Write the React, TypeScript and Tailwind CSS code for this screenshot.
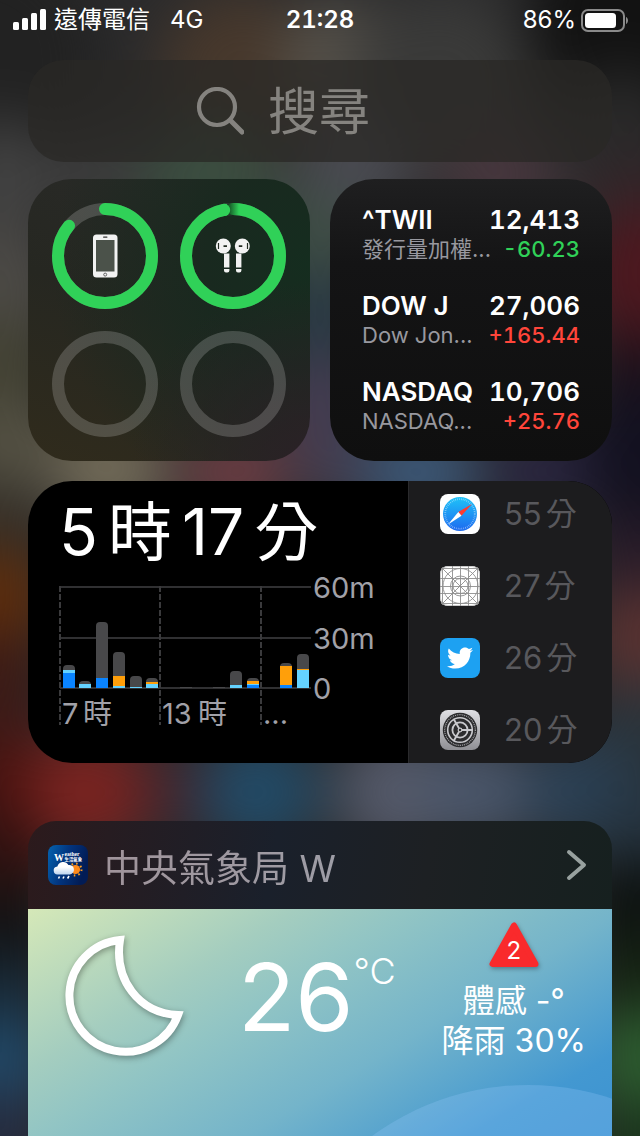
import React from 'react';
import { FaTwitter } from 'react-icons/fa';

interface Stock {
  symbol: string;
  name: string;
  price: string;
  change: string;
}

interface Bar {
  x: number;
  top: number;
  parts: { y: number; fill: string }[];
}

interface AppUsage {
  label: string;
  minutes: number;
  icon: React.ReactNode;
}

const BLUE = '#0a84ff';
const CYAN = '#64d2ff';
const ORANGE = '#ff9f0a';
const BASELINE = 114;

// [cx, cy, radius, color]
const WALLPAPER: [number, number, number, string][] = [
  [-20, 60, 120, '#222222'],
  [660, 20, 130, '#121212'],
  [240, 70, 80, '#47382c'],
  [340, 60, 60, '#55514a'],
  [440, 80, 90, '#3a3a39'],
  [620, 130, 60, '#2a2a2a'],
  [0, 180, 60, '#414141'],
  [100, 175, 50, '#3c3c3c'],
  [210, 180, 70, '#3b4d40'],
  [350, 175, 60, '#4a4a52'],
  [500, 180, 60, '#46363d'],
  [0, 290, 65, '#4c4a46'],
  [0, 370, 55, '#434233'],
  [0, 450, 55, '#545143'],
  [320, 240, 50, '#3f4f46'],
  [320, 320, 50, '#2a3b46'],
  [320, 400, 45, '#473f56'],
  [640, 200, 50, '#32262a'],
  [650, 280, 75, '#4c181f'],
  [640, 375, 45, '#1e0e18'],
  [650, 460, 80, '#131120'],
  [110, 468, 60, '#706957'],
  [235, 472, 55, '#683c42'],
  [330, 470, 35, '#473f53'],
  [420, 472, 60, '#3b5573'],
  [540, 472, 50, '#29253f'],
  [-5, 530, 50, '#342f28'],
  [-5, 600, 55, '#5e2d0c'],
  [-5, 680, 50, '#3d1a15'],
  [635, 560, 45, '#291b29'],
  [645, 640, 55, '#5a3231'],
  [645, 730, 50, '#2a343b'],
  [0, 780, 55, '#48120f'],
  [90, 792, 65, '#782320'],
  [180, 792, 40, '#3f2730'],
  [260, 792, 60, '#224a66'],
  [400, 792, 65, '#545969'],
  [480, 792, 55, '#4a566a'],
  [580, 792, 55, '#2b4156'],
  [645, 820, 50, '#263542'],
  [0, 860, 50, '#2f100f'],
  [0, 935, 50, '#101011'],
  [0, 1000, 50, '#182a38'],
  [0, 1065, 50, '#204a6b'],
  [0, 1140, 50, '#262c40'],
  [640, 910, 55, '#0c1110'],
  [640, 980, 50, '#142212'],
  [645, 1060, 55, '#2c5d2f'],
  [645, 1150, 50, '#19351b'],
];

const STOCKS: Stock[] = [
  { symbol: '^TWII', name: '發行量加權...', price: '12,413', change: '-60.23' },
  { symbol: 'DOW J', name: 'Dow Jon...', price: '27,006', change: '+165.44' },
  { symbol: 'NASDAQ', name: 'NASDAQ...', price: '10,706', change: '+25.76' },
];

const BARS: Bar[] = [
  { x: 5, top: 91, parts: [{ y: 96, fill: CYAN }, { y: 99, fill: BLUE }] },
  { x: 21, top: 107, parts: [{ y: 110, fill: CYAN }] },
  { x: 38, top: 48, parts: [{ y: 104, fill: BLUE }] },
  { x: 55, top: 78, parts: [{ y: 102, fill: ORANGE }, { y: 112, fill: CYAN }] },
  { x: 72, top: 102, parts: [{ y: 113, fill: CYAN }] },
  { x: 88, top: 104, parts: [{ y: 108, fill: ORANGE }, { y: 110, fill: CYAN }] },
  { x: 122, top: 113, parts: [] },
  { x: 155, top: 113, parts: [] },
  { x: 172, top: 97, parts: [{ y: 111, fill: CYAN }] },
  { x: 189, top: 104, parts: [{ y: 107, fill: ORANGE }, { y: 110, fill: CYAN }, { y: 111, fill: BLUE }] },
  { x: 222, top: 89, parts: [{ y: 92, fill: ORANGE }, { y: 111, fill: BLUE }] },
  { x: 239, top: 80, parts: [{ y: 95, fill: ORANGE }, { y: 96, fill: CYAN }] },
];

const Wallpaper = () => (
  <svg
    className="absolute inset-0 -z-10 h-full w-full"
    viewBox="0 0 640 1136"
    preserveAspectRatio="none"
    aria-hidden="true"
  >
    <defs>
      <filter id="soft" x="-30%" y="-30%" width="160%" height="160%" colorInterpolationFilters="sRGB">
        <feGaussianBlur stdDeviation="28" />
      </filter>
    </defs>
    <rect width="640" height="1136" fill="#2b2b2c" />
    <g filter="url(#soft)">
      {WALLPAPER.map(([cx, cy, r, fill], i) => (
        <circle key={i} cx={cx} cy={cy} r={r} fill={fill} />
      ))}
    </g>
  </svg>
);

const StatusBar = () => (
  <header className="flex h-10 items-center px-3 text-2xl text-white">
    <div className="flex flex-1 items-center">
      <svg className="h-6 w-9" viewBox="0 0 36 24" fill="#fff" aria-hidden="true">
        <rect x="1" y="14" width="6" height="8" rx="1.5" />
        <rect x="10" y="10" width="6" height="12" rx="1.5" />
        <rect x="19" y="5" width="6" height="17" rx="1.5" />
        <rect x="28" y="1" width="6" height="21" rx="1.5" />
      </svg>
      <span className="ml-1.5">遠傳電信</span>
      <span className="ml-5">4G</span>
    </div>
    <span className="font-semibold tabular-nums">21:28</span>
    <div className="flex flex-1 items-center justify-end gap-1">
      <span>86%</span>
      <svg className="h-6 w-12" viewBox="0 0 48 24" aria-hidden="true">
        <rect x="2" y="2" width="42" height="21" rx="6" fill="none" stroke="#8a8a8a" strokeWidth="2" />
        <rect x="5" y="5" width="31" height="15" rx="3.5" fill="#fff" />
        <path d="M46 9c1.300.600 2 2 2 3.500s-.7 2.900-2 3.500z" fill="#8a8a8a" />
      </svg>
    </div>
  </header>
);

const SearchBar = () => (
  <label className="mt-5 flex h-[102px] items-center gap-6 rounded-[36px] bg-[#292826]/75 pl-42 text-[#85837f]">
    <svg className="size-12 shrink-0" viewBox="0 0 48 48" fill="none" stroke="currentColor" strokeLinecap="round" aria-hidden="true">
      <circle cx="21" cy="20" r="18" strokeWidth="4.200" />
      <path d="M34.500 33.500L46 45" strokeWidth="5" />
    </svg>
    <input
      type="search"
      aria-label="搜尋"
      placeholder="搜尋"
      className="w-full min-w-0 bg-transparent text-[51px] leading-none outline-none placeholder:text-[#85837f]"
    />
  </label>
);

const Ring = ({ level, children }: { level?: number; children?: React.ReactNode }) => {
  const length = 2 * Math.PI * 47;
  return (
    <svg className="w-full" viewBox="0 0 106 106" fill="none">
      <circle cx="53" cy="53" r="47" stroke="#fff" strokeOpacity="0.18" strokeWidth="12" />
      {level && (
        <circle
          cx="53"
          cy="53"
          r="47"
          stroke="#30d158"
          strokeWidth="12"
          strokeLinecap="round"
          strokeDasharray={`${level * length} ${length}`}
          transform="rotate(-90 53 53)"
        />
      )}
      {children}
    </svg>
  );
};

const BatteryWidget = () => (
  <section className="grid grid-cols-2 gap-[22px] rounded-[44px] bg-[radial-gradient(circle_at_100%_100%,#2a2126_0%,#2a212600_45%),radial-gradient(circle_at_100%_30%,#152d1f_0%,#19291f_30%,#25262200_75%),linear-gradient(200deg,#292a28_10%,#262721_50%,#302b1c_100%)] p-6">
    <Ring level={0.86}>
      <rect x="41" y="31.500" width="24.500" height="43" rx="3.500" fill="#f2f2f2" />
      <rect x="44" y="37" width="18.500" height="31.500" fill="#4b524a" />
      <rect x="51" y="33.500" width="4.500" height="1.200" rx="0.600" fill="#333" />
      <circle cx="53.200" cy="71.600" r="1.500" stroke="#444" strokeWidth="0.800" />
    </Ring>
    <Ring level={0.97}>
      <defs>
        <linearGradient id="cap-shadow" x1="0" y1="0" x2="1" y2="0">
          <stop offset="0.250" stopColor="#0b2a14" stopOpacity="0.650" />
          <stop offset="1" stopColor="#0b2a14" stopOpacity="0" />
        </linearGradient>
      </defs>
      <path d="M47 .4Q53-.3 59 .5V12.300Q53 11.500 47 12.500z" fill="url(#cap-shadow)" />
      <circle cx="44.200" cy="6.900" r="6" fill="#30d158" />
      <g fill="#f2f2f2">
        <circle cx="43.300" cy="43" r="7.500" />
        <circle cx="62.300" cy="43" r="7.500" />
        <path d="M44 50.500h5.400V64.500H44zM56 50.500h5.400V64.500H56z" />
        <path d="M44 66h5.400v1.500a2 2 0 0 1-2 2h-1.400a2 2 0 0 1-2-2zM56 66h5.400v1.500a2 2 0 0 1-2 2H58a2 2 0 0 1-2-2z" />
      </g>
      <path d="M38.500 40v6M67.500 40v6" stroke="#222b22" strokeWidth="1.200" />
      <path d="M43.500 43.200h3.500M58.800 43.200h3.500" stroke="#222b22" strokeWidth="1.800" />
    </Ring>
    <Ring />
    <Ring />
  </section>
);

const StocksWidget = () => (
  <section className="flex flex-col gap-7 rounded-[44px] bg-linear-to-b from-[#1f1f20] via-[#141415] via-30% to-[#0f0f0f] px-8 py-[26px]">
    {STOCKS.map(stock => (
      <div key={stock.symbol} className="whitespace-nowrap">
        <div className="flex justify-between text-[26px] leading-[30px] font-semibold text-white">
          <span>{stock.symbol}</span>
          <span className="tabular-nums">{stock.price}</span>
        </div>
        <div className="flex justify-between text-[22px] leading-7">
          <span className="text-[#98989f]">{stock.name}</span>
          <span
            className={
              stock.change.startsWith('-')
                ? 'font-medium text-[#30d158] tabular-nums'
                : 'font-medium text-[#ff453a] tabular-nums'
            }
          >
            {stock.change}
          </span>
        </div>
      </div>
    ))}
  </section>
);

const UsageChart = () => (
  <svg className="h-[170px] w-[324px]" viewBox="0 -10 324 170">
    <g stroke="#303032" strokeWidth="2">
      <path d="M1 13H252M1 64H252M1 114H252" />
      <path d="M1 12V151M101 12V151M202 12V151" stroke="#3a3a3c" strokeDasharray="6 2" />
    </g>
    {BARS.map(bar => (
      <g key={bar.x} transform="translate(-1 0)">
        <path
          d={
            BASELINE - bar.top > 3
              ? `M${bar.x} ${BASELINE}V${bar.top + 4}q0-4 4-4h4q4 0 4 4V${BASELINE}z`
              : `M${bar.x} ${BASELINE}v-1h12v1z`
          }
          fill="#48484a"
        />
        {bar.parts.map(part => (
          <rect key={part.y} x={bar.x} y={part.y} width="12" height={BASELINE - part.y} fill={part.fill} />
        ))}
      </g>
    ))}
    <g fill="#a1a1a8" className="text-[29px]">
      <text x="254" y="24">60m</text>
      <text x="254" y="75">30m</text>
      <text x="254" y="125">0</text>
      <text x="3" y="150">7</text>
      <text x="24" y="150">時</text>
      <text x="103" y="150">13</text>
      <text x="139" y="150">時</text>
      <text x="204" y="150">...</text>
    </g>
  </svg>
);

const SafariIcon = () => (
  <svg className="size-10" viewBox="0 0 40 40">
    <defs>
      <linearGradient id="safari" x1="0" y1="0" x2="0" y2="1">
        <stop stopColor="#1fc3f8" />
        <stop offset="1" stopColor="#1d6af0" />
      </linearGradient>
    </defs>
    <rect width="40" height="40" rx="8" fill="#fff" />
    <circle cx="20" cy="20" r="17" fill="url(#safari)" />
    <circle cx="20" cy="20" r="14.800" fill="none" stroke="#fff" strokeOpacity="0.6" strokeWidth="1.800" strokeDasharray="0.600 1.300" />
    <path d="M32 10L18.300 18 21.500 21.800z" fill="#ff3b30" />
    <path d="M8 30.500L18.300 18 21.500 21.800z" fill="#fff" />
  </svg>
);

const TemplateIcon = () => (
  <svg className="size-10" viewBox="0 0 40 40" fill="none" stroke="#8e8e8e" strokeWidth="0.900">
    <rect width="40" height="40" rx="8" fill="#fff" stroke="none" />
    <rect x="0.500" y="0.500" width="39" height="39" rx="7.500" stroke="#c4c4c4" />
    <path d="M2.500 1v38M37.500 1v38M12.500 0v40M20.500 0v40M28.500 0v40M1 2.500h38M1 37.500h38M0 12.500h40M0 20.500h40M0 27.500h40" />
    <path d="M3 3l34 34M37 3L3 37" />
    <circle cx="20.500" cy="20" r="17.500" />
    <circle cx="20.500" cy="20" r="10" />
    <circle cx="20.500" cy="20" r="7.500" />
  </svg>
);

const TwitterIcon = () => (
  <div className="flex size-10 items-center justify-center rounded-lg bg-[#1da1f2] text-white">
    <FaTwitter size={26} />
  </div>
);

const SettingsIcon = () => (
  <svg className="size-10" viewBox="0 0 40 40" fill="none">
    <defs>
      <linearGradient id="settings" x1="0" y1="0" x2="0" y2="1">
        <stop stopColor="#e0e0e4" />
        <stop offset="1" stopColor="#8f8f94" />
      </linearGradient>
    </defs>
    <rect width="40" height="40" rx="8" fill="url(#settings)" />
    <circle cx="20" cy="20" r="17.200" fill="#2c2c2e" />
    <circle cx="20" cy="20" r="15.300" stroke="#b5b5b9" strokeWidth="1.200" strokeDasharray="0.900 1" />
    <circle cx="20" cy="20" r="12.300" stroke="#c9c9cd" strokeWidth="1.600" />
    <circle cx="20" cy="20" r="7.600" stroke="#c9c9cd" strokeWidth="1.800" />
    <path d="M22 20H33M19 18.200L13.500 8.700M19 21.800L13.500 31.300" stroke="#c9c9cd" strokeWidth="1.900" />
    <circle cx="20" cy="20" r="1.800" fill="#2c2c2e" stroke="#c9c9cd" strokeWidth="1.200" />
  </svg>
);

const APPS: AppUsage[] = [
  { label: 'Safari', minutes: 55, icon: <SafariIcon /> },
  { label: 'App', minutes: 27, icon: <TemplateIcon /> },
  { label: 'Twitter', minutes: 26, icon: <TwitterIcon /> },
  { label: 'Settings', minutes: 20, icon: <SettingsIcon /> },
];

const ScreenTimeWidget = () => (
  <section className="mt-5 flex overflow-hidden rounded-[44px] bg-black">
    <div className="flex-1 pt-[19px] pb-[29px] pl-[31px]">
      <div className="flex items-baseline gap-2.5 text-[64px] leading-none text-white">
        <span>5</span>
        <span>時</span>
        <span>17</span>
        <span>分</span>
      </div>
      <UsageChart />
    </div>
    <ul className="flex w-[204px] flex-col gap-8 border-l border-[#2a2a2c] bg-[#1c1c1e] pt-[13px] pl-[31px]">
      {APPS.map(app => (
        <li key={app.label} className="flex h-10 items-center gap-6">
          {app.icon}
          <span className="flex items-baseline gap-1 text-[31px] leading-10 text-[#58585c]">
            <span>{app.minutes}</span>
            <span>分</span>
          </span>
        </li>
      ))}
    </ul>
  </section>
);

const WeatherAppIcon = () => (
  <svg className="size-10" viewBox="0 0 40 40">
    <defs>
      <linearGradient id="weather-app" x1="0" y1="0" x2="1" y2="0.300">
        <stop stopColor="#0463b0" />
        <stop offset="0.500" stopColor="#02357f" />
        <stop offset="1" stopColor="#021c55" />
      </linearGradient>
      <linearGradient id="cloud" x1="0" y1="0" x2="0" y2="1">
        <stop offset="0.400" stopColor="#fff" />
        <stop offset="1" stopColor="#bcd3ee" />
      </linearGradient>
    </defs>
    <rect width="40" height="40" rx="8" fill="url(#weather-app)" />
    <g fill="#fff" fontWeight="700">
      <text x="6" y="15.500" fontSize="10" fontFamily="Liberation Serif, serif">W</text>
      <text x="16.500" y="11" fontSize="5.500" fontFamily="Liberation Serif, serif">eather</text>
      <text x="16.500" y="16" fontSize="4.400">生活氣象</text>
    </g>
    <circle cx="27.500" cy="24.500" r="6" fill="none" stroke="#ff9d1c" strokeWidth="2" strokeDasharray="1.500 3.200" />
    <circle cx="27.500" cy="24.500" r="4.600" fill="#ff8a1a" />
    <path d="M10 29.500a4 4 0 0 1-.6-8 6 6 0 0 1 11-1.500 4.700 4.700 0 0 1 1.500 9.500z" fill="url(#cloud)" />
    <path d="M11.500 31.500l-1 2M16 31.500l-1 2M21 31l-1.400 2.500" stroke="#fff" strokeWidth="1.600" />
  </svg>
);

const WeatherWidget = () => (
  <section className="mt-[58px] flex flex-1 flex-col">
    <a
      href="#weather"
      className="flex h-[88px] items-center gap-4 rounded-t-[28px] bg-[linear-gradient(100deg,#2c1a1c_0%,#1a202b_42%,#1d2023_68%,#16201f_100%)] pr-6 pl-5"
    >
      <WeatherAppIcon />
      <span className="flex-1 bg-linear-to-r from-[#a0949b] to-[#9ba5b0] bg-clip-text pt-2 text-[37px] leading-[48px] text-transparent">
        中央氣象局 W
      </span>
      <svg className="h-9 w-6" viewBox="0 0 24 36" fill="none" stroke="#98a19f" strokeWidth="4" strokeLinecap="round" strokeLinejoin="round" aria-hidden="true">
        <path d="M5 5L20 18 5 31" />
      </svg>
    </a>
    <div className="relative flex flex-1 items-start overflow-hidden bg-[linear-gradient(149deg,#d5e8b8_0%,#a4cdbf_28%,#92c5c4_40%,#74b4ca_62%,#4398d1_86%,#3d93d1_100%)] text-white">
      <div className="absolute top-44 -right-45 size-[528px] rounded-full bg-[#9ccbff]/25" />
      <svg
        className="mt-5 ml-8 size-33 drop-shadow-[1px_2px_3px_rgba(0,0,0,0.35)]"
        viewBox="0 0 132 132"
        fill="none"
        stroke="#fff"
        strokeWidth="8"
        aria-hidden="true"
      >
        <path d="M60 11C54 50 78 84 118 86A56 56 0 1 1 60 11z" />
      </svg>
      <div className="mt-10 flex flex-1 items-start justify-center">
        <span className="text-[94px] leading-24">26</span>
        <span className="text-4xl leading-11 font-light">°C</span>
      </div>
      <div className="mt-3 mr-[26px] flex flex-col items-center text-[32px] leading-10 whitespace-nowrap">
        <div className="relative mb-3 flex h-12 w-[52px] items-end justify-center">
          <svg
            className="absolute inset-0 h-full w-full drop-shadow-[1px_2px_2px_rgba(0,0,0,0.3)]"
            viewBox="0 0 52 48"
            fill="#f92a2c"
            stroke="#f92a2c"
            strokeWidth="6"
            strokeLinejoin="round"
            aria-hidden="true"
          >
            <path d="M26 4.500L4.500 43h43z" />
          </svg>
          <span className="relative text-2xl leading-9">2</span>
        </div>
        <span>體感 -°</span>
        <span>降雨 30%</span>
      </div>
    </div>
  </section>
);

const App: React.FC = () => (
  <div className="relative isolate flex min-h-screen flex-col overflow-hidden font-['Inter','Noto_Sans_CJK_TC',sans-serif]">
    <Wallpaper />
    <StatusBar />
    <main className="flex flex-1 flex-col px-7">
      <SearchBar />
      <div className="mt-[17px] grid grid-cols-2 gap-5">
        <BatteryWidget />
        <StocksWidget />
      </div>
      <ScreenTimeWidget />
      <WeatherWidget />
    </main>
  </div>
);

export default App;
